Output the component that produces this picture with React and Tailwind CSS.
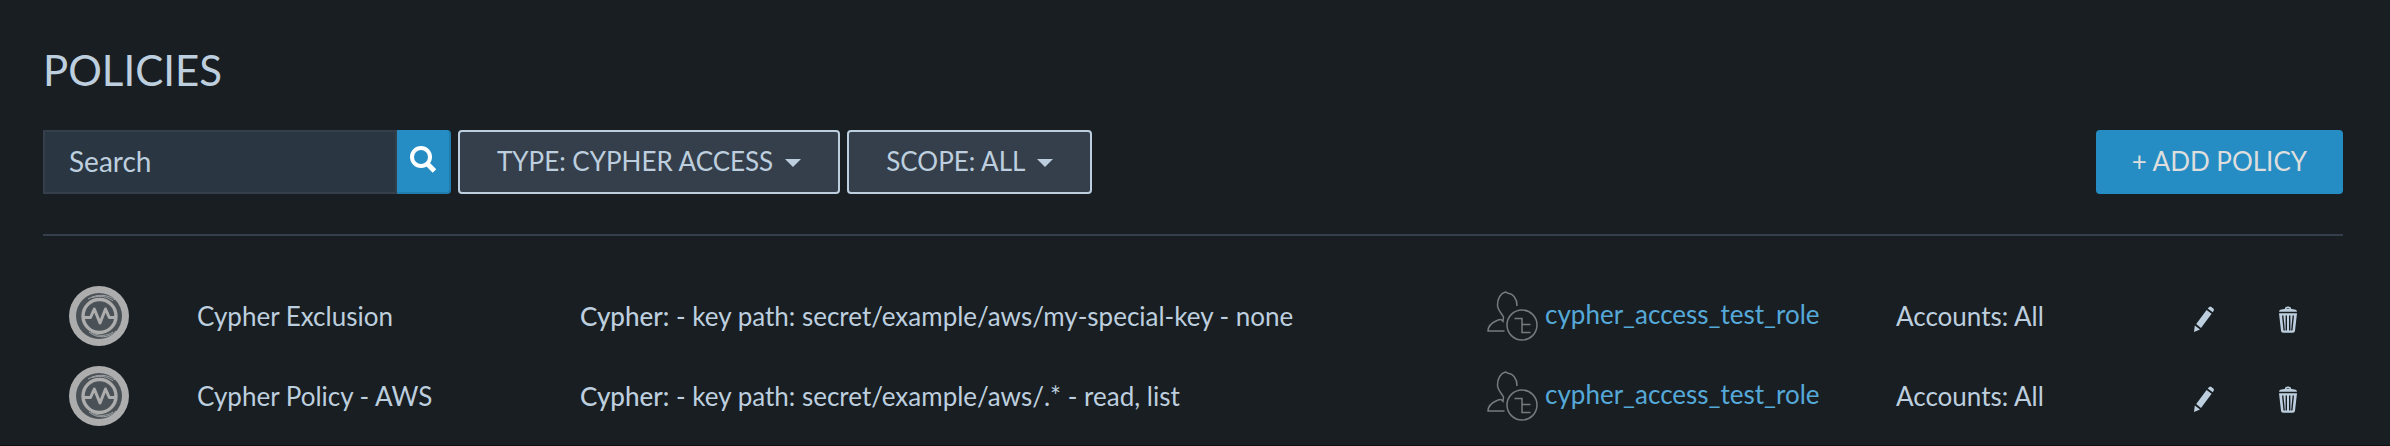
const policies = [
  { name: 'Cypher Exclusion', detail: '- key path: secret/example/aws/my-special-key - none' },
  { name: 'Cypher Policy - AWS', detail: '- key path: secret/example/aws/.* - read, list' },
];

function SearchIcon() {
  return (
    <svg className="h-7 w-7" viewBox="0 0 28 28" fill="none" stroke="#fff" aria-hidden="true">
      <circle cx="12" cy="12" r="9" strokeWidth="4" />
      <path d="M18 18.500 25.500 26" strokeWidth="5" />
    </svg>
  );
}

function Caret() {
  return (
    <svg className="mt-1 h-2 w-4" viewBox="0 0 16 8" fill="#bdcfdf" aria-hidden="true">
      <path d="M0 0h16L8 8z" />
    </svg>
  );
}

function PolicyIcon() {
  return (
    <svg className="block h-15 w-15" viewBox="0 0 60 60" fill="none" aria-hidden="true">
      <circle cx="30" cy="30" r="30" fill="#adadad" />
      <circle cx="30" cy="30" r="23" fill="#4b5257" />
      <path d="M19 13C29 7 40 9 46 14M23 11.500C32 9 39 11 44 15M20 46C28 53 41 52 47 45M22 46C30 51 38 50 44 46" stroke="#a2a4a6" strokeWidth="1" />
      <circle cx="30.500" cy="30" r="16.500" stroke="#adadad" strokeWidth="3.400" />
      <path d="M15 31.500h6.500l3.800-8.500 5.700 14 5.500-14 3.800 8.500H46" stroke="#adadad" strokeWidth="3" strokeLinejoin="round" />
    </svg>
  );
}

function RoleIcon() {
  return (
    <svg className="block h-13 w-13 shrink-0" viewBox="0 0 52 52" fill="none" stroke="#777b7e" strokeWidth="1.500" aria-hidden="true">
      <path d="M17.500 41H1c0-5 3-8 9-10.500 3-1.300 4-1.500 6 .7l.5-4.200c-2-4-6-7-6-12C10.500 8 14 3 18.500 2l2 1C27 4 30 8 30 16" />
      <circle cx="35" cy="35" r="15" />
      <path d="M27.500 28.500H35v14h8.500M35 34.500h8.500" />
    </svg>
  );
}

function PencilIcon() {
  return (
    <svg className="block h-7 w-6" viewBox="0 0 24 28" fill="#bdcfdf" aria-hidden="true">
      <path d="M15.700 2.600 17.200.9q.8-.8 1.700-.2l2.500 1.900q.8.900.4 1.900l-1.100 1.800zM14.600 4l5 3.800L9 22 4.200 18zM2.800 19.400 8 23.600 2 26z" />
    </svg>
  );
}

function TrashIcon() {
  return (
    <svg className="block h-7 w-5" viewBox="0 0 20 28" fill="none" aria-hidden="true">
      <path d="M7.500 3.200Q7.500 1.200 10 1.200t2.500 2" stroke="#bdcfdf" strokeWidth="1.500" />
      <path d="M1 5.800q0-2 2-2.200L10 2.600l7 1Q19 3.800 19 5.800zM1 7.300h18l-2 17.500q-.2 2-2.200 2H5.200Q3.200 26.800 3 24.800z" fill="#bdcfdf" />
      <path d="M4.700 9.500 6.200 24.500M8.300 9.500V24.500M11.700 9.500V24.500M15.300 9.500 13.800 24.500" stroke="#191e22" strokeWidth="1.400" />
    </svg>
  );
}

const filterClass =
  'flex h-16 items-center gap-3 rounded-sm border-2 border-[#bdcfdf] bg-[#353f4b] px-[37px] pb-0.5';

export default function App() {
  return (
    <main className="min-h-screen border-b border-[#120d12] bg-[#191e22] pt-12 pr-[47px] pl-[43px] font-['Lato',sans-serif] text-[26px] leading-9 text-[#bdcfdf]">
      <h1 className="text-[42px] leading-[44px]">POLICIES</h1>
      <div className="mt-[38px] flex items-center justify-between border-b-2 border-[#353f4b] pb-10">
        <div className="flex gap-[7px]">
          <form className="flex" role="search">
            <input
              type="search"
              aria-label="Search"
              placeholder="Search"
              className="h-16 w-[354px] border-2 border-[#353f4b] bg-[#2a3642] px-6 pb-0.5 text-[28px] placeholder:text-[#bdcfdf] placeholder:opacity-100"
            />
            <button
              type="button"
              aria-label="Run search"
              className="flex h-16 w-[54px] items-center justify-center rounded-r-sm border-r-2 border-b-2 border-[#217dae] bg-[#258dc3] pb-1"
            >
              <SearchIcon />
            </button>
          </form>
          <button type="button" className={filterClass}>
            TYPE: CYPHER ACCESS <Caret />
          </button>
          <button type="button" className={filterClass}>
            SCOPE: ALL <Caret />
          </button>
        </div>
        <button type="button" className="h-16 rounded-sm bg-[#258dc3] px-9 pb-0.5 text-[#dedede]">
          + ADD POLICY
        </button>
      </div>
      <table className="mt-10 w-full table-fixed text-left">
        <colgroup>
          <col className="w-32" />
          <col className="w-[383px]" />
          <col />
          <col className="w-[409px]" />
          <col className="w-[298px]" />
          <col className="w-[175px]" />
        </colgroup>
        <tbody>
          {policies.map((policy) => (
            <tr key={policy.name} className="h-20">
              <td className="pl-[26px]">
                <PolicyIcon />
              </td>
              <td className="pl-[26px]">{policy.name}</td>
              <td className="pl-[26px]">
                <span className="font-medium">Cypher:</span> {policy.detail}
              </td>
              <td className="pl-[26px]">
                <div className="flex items-center gap-1.5">
                  <RoleIcon />
                  <a href="#role" className="pb-1 text-[#55a9d9]">
                    cypher_access_test_role
                  </a>
                </div>
              </td>
              <td className="pl-[26px]">Accounts: All</td>
              <td className="pl-6">
                <div className="flex gap-[62px] pt-2">
                  <button type="button" aria-label="Edit policy">
                    <PencilIcon />
                  </button>
                  <button type="button" aria-label="Delete policy">
                    <TrashIcon />
                  </button>
                </div>
              </td>
            </tr>
          ))}
        </tbody>
      </table>
    </main>
  );
}
